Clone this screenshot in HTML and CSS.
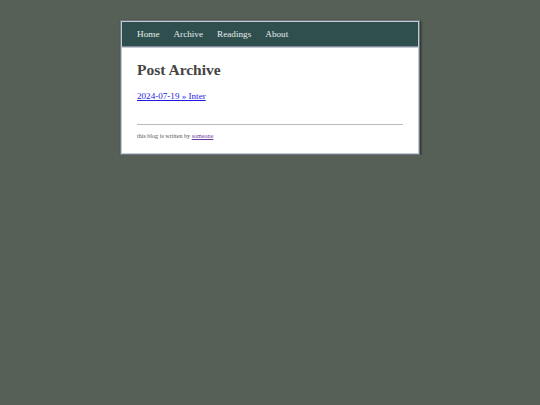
FILE: index.html
```html
<!DOCTYPE html>
<html>
<head>
<meta charset="utf-8">
<title>Post Archive</title>
<link rel="stylesheet" href="styles.css">
</head>
<body>
<div class="wrap">
  <nav class="nav">
    <a href="#">Home</a>
    <a href="#">Archive</a>
    <a href="#">Readings</a>
    <a href="#">About</a>
  </nav>
  <main class="content">
    <h1 class="title">Post Archive</h1>
    <p class="entry"><a href="#" class="post-link">2024-07-19 » Inter</a></p>
    <hr class="rule">
    <p class="footer">this blog is written by <a href="#" class="author">someone</a></p>
  </main>
</div>
</body>
</html>
```

FILE: styles.css
```css
html, body {
  margin: 0;
  padding: 0;
  background: #566056;
  font-family: "Liberation Serif", "Times New Roman", serif;
}
.wrap {
  width: 296px;
  margin: 20px auto 0;
  border: 1px solid #6e7886;
  padding: 1px;
  background: #c3cad3;
  box-shadow: 1px 1px 2px rgba(0,0,0,0.6);
}
.nav {
  background: #2f4f4f;
  height: 24px;
  padding: 0 15px;
  display: flex;
  align-items: center;
  gap: 14px;
  border-bottom: 1px solid #7d8a98;
  margin-bottom: 1px;
}
.nav a {
  color: #e6eceb;
  text-decoration: none;
  font-size: 9.2px;
}
.content {
  background: #fff;
  padding: 13px 15px 14px;
}
.title {
  margin: 0 0 12px;
  font-size: 15.5px;
  color: #444;
  font-weight: bold;
}
.entry {
  margin: 0;
  font-size: 9.1px;
}
.post-link {
  color: #1a1ae0;
}
.rule {
  margin: 23px 0 8px;
  border: 0;
  border-top: 1px solid #bbb;
}
.footer {
  margin: 0;
  font-size: 6.1px;
  color: #555;
}
.author {
  color: #6a3a9a;
}
```
